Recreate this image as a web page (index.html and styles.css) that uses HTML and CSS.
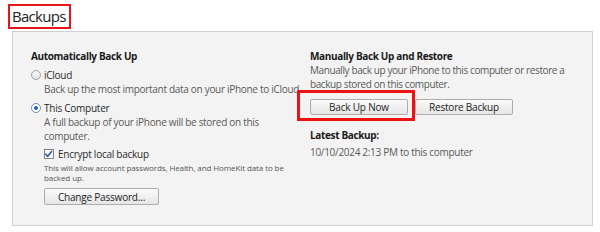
FILE: index.html
```html
<!DOCTYPE html>
<html lang="en">
<head>
<meta charset="utf-8">
<title>Backups</title>
<link rel="stylesheet" href="styles.css">
</head>
<body>
<div class="page">
  <h1 class="title">Backups</h1>
  <section class="panel">
    <div class="col left">
      <h2 class="head">Automatically Back Up</h2>
      <div class="opt"><span class="radio"></span><span>iCloud</span></div>
      <p class="desc">Back up the most important data on your iPhone to iCloud.</p>
      <div class="opt opt-gap"><span class="radio on"></span><span>This Computer</span></div>
      <p class="desc">A full backup of your iPhone will be stored on this<br>computer.</p>
      <div class="sub">
        <div class="opt check-row"><span class="check"><svg viewBox="0 0 10 10" width="10" height="10"><path d="M2 5.2 L4.2 7.6 L8.4 2.2" fill="none" stroke="#1f5fb4" stroke-width="1.8" stroke-linecap="round" stroke-linejoin="round"/></svg></span><span>Encrypt local backup</span></div>
        <p class="small">This will allow account passwords, Health, and HomeKit data to be<br>backed up.</p>
        <button class="btn btn-wide">Change Password...</button>
      </div>
    </div>
    <div class="col right">
      <h2 class="head">Manually Back Up and Restore</h2>
      <p class="desc desc-tight">Manually back up your iPhone to this computer or restore a<br>backup stored on this computer.</p>
      <div class="btns">
        <button class="btn">Back Up Now</button>
        <button class="btn">Restore Backup</button>
        <span class="mark"></span>
      </div>
      <h2 class="head head-latest">Latest Backup:</h2>
      <p class="desc date">10/10/2024 2:13 PM to this computer</p>
    </div>
  </section>
</div>
</body>
</html>
```
FILE: styles.css
```css
* { box-sizing: border-box; }
html, body { margin: 0; padding: 0; background: #ffffff; }
body {
  font-family: "Open Sans", "Noto Sans", sans-serif;
  color: #222;
  width: 600px;
  height: 232px;
  overflow: hidden;
}
.page {
  padding: 4px 0 0 8px;
}
.title {
  display: inline-block;
  margin: 0;
  font-size: 15px;
  font-weight: 400;
  line-height: 21px;
  padding: 0 3px 0 2px;
  border: 2px solid #e8141b;
  color: #1e1e1e;
  letter-spacing: -0.7px;
}
.panel {
  margin: 2px 0 0 4px;
  width: 581px;
  height: 195px;
  background: #f3f3f3;
  border: 1px solid #d2d2d2;
  display: grid;
  grid-template-columns: 279px 1fr;
  padding: 17px 0 0 18px;
}
.col { white-space: nowrap; }
.head {
  margin: 0;
  font-size: 10px;
  font-weight: 700;
  line-height: 14px;
  color: #1a1a1a;
  letter-spacing: -0.35px;
}
.opt {
  display: flex;
  align-items: center;
  gap: 3px;
  font-size: 10px;
  line-height: 14px;
  color: #2a2a2a;
  margin-top: 5px;
  letter-spacing: -0.25px;
}
.opt-gap { margin-top: 5px; }
.radio {
  width: 10px;
  height: 10px;
  border-radius: 50%;
  border: 1px solid #a0a0a0;
  background: linear-gradient(#f8f8f8, #e4e4e4);
  display: flex;
  align-items: center;
  justify-content: center;
  flex: none;
}
.radio.on { border-color: #6d8fb8; background: #fff; }
.radio.on::after {
  content: "";
  width: 4px;
  height: 4px;
  border-radius: 50%;
  background: #1f5fb4;
}
.desc {
  margin: 0 0 0 13px;
  font-size: 10px;
  line-height: 14px;
  color: #5a5a5a;
  letter-spacing: -0.3px;
}
.sub {
  margin-left: 13px;
}
.check-row { margin-top: 4px; gap: 4px; }
.check {
  width: 10px;
  height: 10px;
  border: 1px solid #7f7f7f;
  background: #fff;
  display: flex;
  flex: none;
}
.check svg { margin: -1px 0 0 -1px; }
.small {
  margin: 2px 0 0 0;
  font-size: 8px;
  line-height: 10px;
  color: #555;
  letter-spacing: -0.1px;
}
.btn {
  font-family: "Open Sans", "Noto Sans", sans-serif;
  font-size: 10px;
  letter-spacing: -0.2px;
  line-height: 14px;
  height: 16px;
  width: 98px;
  padding: 0;
  color: #1e1e1e;
  background: linear-gradient(#fafafa, #e6e6e6);
  border: 1px solid #adadad;
  border-radius: 2px;
  display: flex;
  align-items: center;
  justify-content: center;
}
.btn-wide { width: 115px; height: 17px; margin-top: 5px; }
.right .desc { margin-left: 0; }
.desc-tight { margin-top: 1px; line-height: 13.5px; letter-spacing: -0.4px; }
.btns {
  position: relative;
  display: flex;
  gap: 7px;
  margin-top: 8px;
}
.mark {
  position: absolute;
  left: -13px;
  top: -9px;
  width: 118px;
  height: 31px;
  border: 3px solid #ee1111;
}
.head-latest { margin-top: 13px; }
.date { margin-top: 3px; }
```
